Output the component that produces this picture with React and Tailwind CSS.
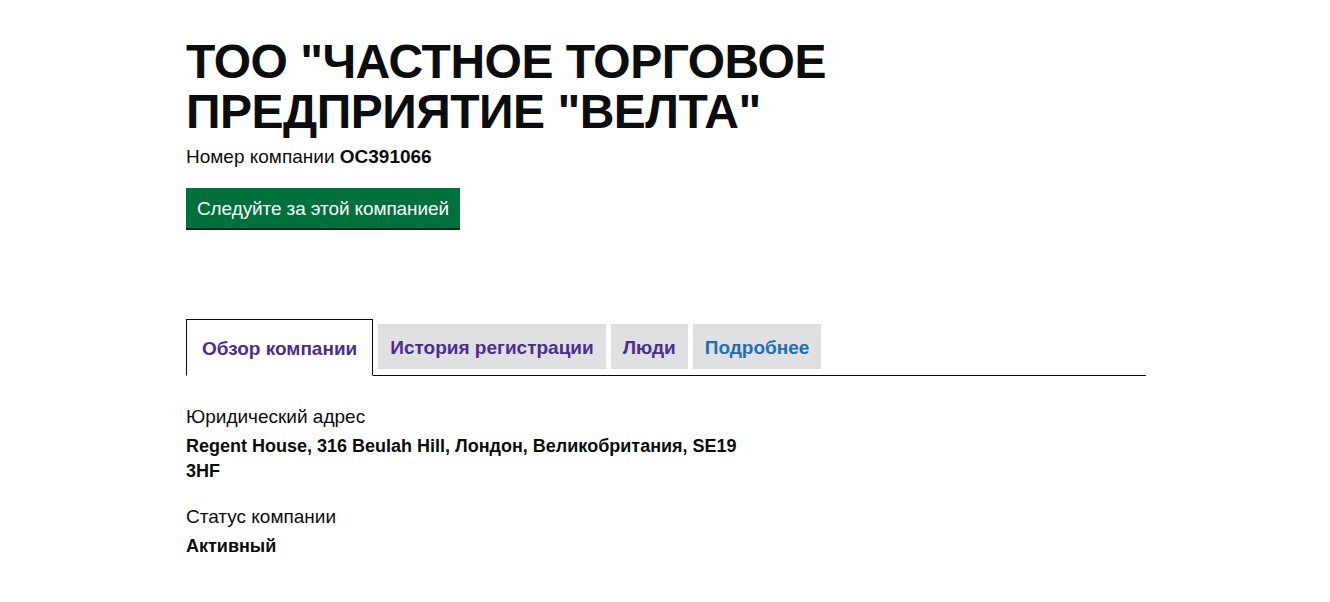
import React from "react";

const tabs = [
  { label: "Обзор компании", color: "text-[#4c2c92]", selected: true },
  { label: "История регистрации", color: "text-[#4c2c92]" },
  { label: "Люди", color: "text-[#4c2c92]" },
  { label: "Подробнее", color: "text-[#1d70b8]" },
];

const App = () => {
  return (
    <div className="min-h-[602px] bg-white text-[#0b0c0c] font-['Liberation_Sans',Arial,sans-serif]">
      <div className="mx-auto w-[962px] pl-[2px] pt-[37px]">
        <h1 className="text-[48px] leading-[50px] font-bold tracking-[-0.5px] w-[700px]">
          ТОО "ЧАСТНОЕ ТОРГОВОЕ ПРЕДПРИЯТИЕ "ВЕЛТА"
        </h1>
        <p className="mt-[7px] text-[19px] leading-[25px]">
          Номер компании <strong className="font-bold">OC391066</strong>
        </p>

        <button className="mt-[19px] h-[40px] px-[11px] bg-[#00703c] text-white text-[19px] leading-[25px] tracking-[-0.1px] shadow-[0_2px_0_#002d18]">
          Следуйте за этой компанией
        </button>

        {/* Tabs */}
        <div className="mt-[91px] flex items-end border-b border-[#0b0c0c]">
          {tabs.map((t) =>
            t.selected ? (
              <div
                key={t.label}
                className={`-mb-px h-[57px] px-[15px] pt-[4px] flex items-center border border-[#0b0c0c] border-b-white bg-white text-[19px] font-bold ${t.color}`}
              >
                {t.label}
              </div>
            ) : (
              <div
                key={t.label}
                className={`ml-[5px] mb-[6px] h-[45px] px-[12px] pt-[4px] flex items-center bg-[#dfe0e1] text-[19px] font-bold ${t.color}`}
              >
                {t.label}
              </div>
            )
          )}
        </div>

        <div className="mt-[28px] w-[565px]">
          <p className="text-[19px] leading-[25px]">Юридический адрес</p>
          <p className="mt-[5px] text-[18px] leading-[25px] font-bold">
            Regent House, 316 Beulah Hill, Лондон, Великобритания, SE19 3HF
          </p>
          <p className="mt-[20px] text-[19px] leading-[25px]">Статус компании</p>
          <p className="mt-[5px] text-[18px] leading-[25px] font-bold">Активный</p>
        </div>
      </div>
    </div>
  );
};

export default App;
